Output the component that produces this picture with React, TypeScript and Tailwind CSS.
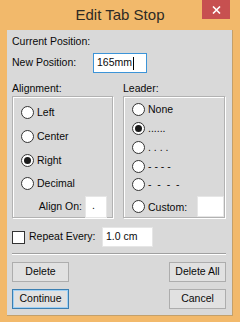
import React from "react";

function Radio({ checked, label, className = "" }: { checked?: boolean; label: React.ReactNode; className?: string }) {
  return (
    <div className={"flex items-center h-[14px] " + className}>
      <div className="w-[13px] h-[13px] rounded-full border border-[#333] bg-white flex items-center justify-center shrink-0">
        {checked && <div className="w-[7px] h-[7px] rounded-full bg-[#1a1a1a]" />}
      </div>
      <span className="ml-[3px] leading-[14px] whitespace-pre">{label}</span>
    </div>
  );
}

function Btn({ label, focus }: { label: string; focus?: boolean }) {
  return (
    <div
      className={
        "w-[57px] h-[20px] flex items-center justify-center bg-[#e1e1e1] border " +
        (focus ? "border-[#3c7fb1] shadow-[inset_0_0_0_1px_#9fd0f5]" : "border-[#adadad]")
      }
    >
      {label}
    </div>
  );
}

export default function App() {
  return (
    <div
      className="w-[240px] h-[322px] bg-[#f2b96b] flex flex-col text-[10.5px] text-[#0a0a0a]"
      style={{ fontFamily: '"Liberation Sans", Arial, sans-serif' }}
    >
      <div className="relative h-[30px] flex items-center justify-center">
        <span className="text-[15px] text-[#2e2a24]">Edit Tab Stop</span>
        <div className="absolute top-0 right-[10px] w-[28px] h-[19px] bg-[#c75050] flex items-center justify-center">
          <svg width="9" height="8" viewBox="0 0 9 8">
            <path d="M1 0.5 L8 7.5 M8 0.5 L1 7.5" stroke="#fff" strokeWidth="1.6" />
          </svg>
        </div>
      </div>
      <div className="ml-[7px] w-[226px] h-[286px] bg-[#d9d9d9] border-r border-b border-[#c4a06a] pl-[5px] pr-[6px] flex flex-col">
        <div className="mt-[4px] h-[14px] leading-[14px]">Current Position:</div>
        <div className="mt-[5px] h-[20px] flex items-center">
          <span className="w-[81px]">New Position:</span>
          <div className="w-[54px] h-[20px] bg-white border border-[#3c94d8] flex items-center pl-[3px]">
            165mm<span className="w-[1px] h-[13px] bg-black ml-[1px]" />
          </div>
        </div>
        <div className="mt-[8px] flex gap-[10px]">
          <div className="w-[101px] flex flex-col">
            <div className="h-[14px] leading-[14px]">Alignment:</div>
            <div className="mt-[1px] h-[122px] border border-[#b2b2b2] shadow-[inset_1px_1px_0_#fff,1px_1px_0_#fff] flex flex-col pl-[8px]">
              <Radio label="Left" className="mt-[8px]" />
              <Radio label="Center" className="mt-[10px]" />
              <Radio label="Right" checked className="mt-[10px]" />
              <Radio label="Decimal" className="mt-[9px]" />
              <div className="mt-[6px] flex items-center justify-end pr-[5px]">
                <span className="mr-[3px]">Align On:</span>
                <div className="w-[22px] h-[22px] bg-white border border-[#e6e6e6] pl-[6px] leading-[16px]">.</div>
              </div>
            </div>
          </div>
          <div className="w-[102px] flex flex-col">
            <div className="h-[14px] leading-[14px]">Leader:</div>
            <div className="mt-[1px] h-[122px] border border-[#b2b2b2] shadow-[inset_1px_1px_0_#fff,1px_1px_0_#fff] flex flex-col pl-[8px]">
              <Radio label="None" className="mt-[5px]" />
              <Radio label="......" checked className="mt-[5px]" />
              <Radio label=". . . ." className="mt-[5px]" />
              <Radio label="- - - -" className="mt-[5px]" />
              <Radio label="-  -  -  -" className="mt-[4px]" />
              <div className="mt-[5px] flex items-center">
                <Radio label="Custom:" />
                <div className="ml-[10px] w-[27px] h-[21px] bg-white border border-[#e6e6e6]" />
              </div>
            </div>
          </div>
        </div>
        <div className="mt-[9px] h-[20px] flex items-center">
          <div className="w-[13px] h-[13px] border border-[#333] bg-white" />
          <span className="ml-[4px] w-[73px]">Repeat Every:</span>
          <div className="w-[51px] h-[20px] bg-white border border-[#e6e6e6] flex items-center pl-[3px]">1.0 cm</div>
        </div>
        <div className="mt-[6px] h-[2px] border-t border-[#a0a0a0] border-b border-b-white" />
        <div className="mt-[7px] flex justify-between">
          <Btn label="Delete" />
          <Btn label="Delete All" />
        </div>
        <div className="mt-[7px] flex justify-between">
          <Btn label="Continue" focus />
          <Btn label="Cancel" />
        </div>
      </div>
    </div>
  );
}
